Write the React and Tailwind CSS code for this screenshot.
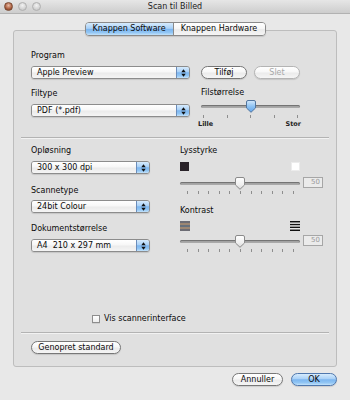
import React from "react";

const blue =
  "bg-[linear-gradient(to_bottom,#d6ebfd_0%,#a8d0f7_45%,#7cb6f0_52%,#92c6f4_80%,#c4e3fb_100%)]";
const white =
  "bg-[linear-gradient(to_bottom,#ffffff_0%,#f7f7f7_45%,#ebebeb_55%,#f5f5f5_100%)]";

function Arrows() {
  return (
    <svg width="5" height="8" viewBox="0 0 5 8">
      <path d="M2.5 0.3 L4.7 3.2 H0.3 Z" fill="#111" />
      <path d="M0.3 4.8 H4.7 L2.5 7.7 Z" fill="#111" />
    </svg>
  );
}

function Popup({ text, className }) {
  return (
    <div
      className={`flex h-[13px] rounded-[3px] border border-[#8c8c8c] overflow-hidden shadow-[0_1px_1px_rgba(0,0,0,0.12)] ${className}`}
    >
      <div
        className={`flex-1 ${white} pl-[5px] text-[8px] leading-[11px] text-[#0a0a0a] whitespace-pre`}
      >
        {text}
      </div>
      <div
        className={`w-[13px] ${blue} border-l border-[#6b8dbb] flex items-center justify-center`}
      >
        <Arrows />
      </div>
    </div>
  );
}

function Pill({ children, className = "", disabled, primary }) {
  return (
    <div
      className={`flex h-[13px] items-center justify-center rounded-full border text-[8px] leading-[11px] shadow-[0_1px_1px_rgba(0,0,0,0.12)] ${
        primary ? `${blue} border-[#4f77ad]` : `${white} ${disabled ? "border-[#b4b4b4]" : "border-[#777]"}`
      } ${disabled ? "text-[#a8a8a8]" : "text-[#0a0a0a]"} ${className}`}
    >
      {children}
    </div>
  );
}

function Knob({ variant, id }) {
  const isBlue = variant === "blue";
  return (
    <svg width="12" height="13" viewBox="0 0 12 13" className="block">
      <defs>
        <linearGradient id={id} x1="0" y1="0" x2="0" y2="1">
          {isBlue ? (
            <>
              <stop offset="0" stopColor="#d4eafd" />
              <stop offset="0.5" stopColor="#8ec3f4" />
              <stop offset="1" stopColor="#5fa2ea" />
            </>
          ) : (
            <>
              <stop offset="0" stopColor="#ffffff" />
              <stop offset="0.6" stopColor="#f0f0f0" />
              <stop offset="1" stopColor="#d8d8d8" />
            </>
          )}
        </linearGradient>
      </defs>
      <path
        d="M1.5 2 Q1.5 0.5 3 0.5 H9 Q10.5 0.5 10.5 2 V8 L6 12.3 L1.5 8 Z"
        fill={`url(#${id})`}
        stroke={isBlue ? "#52769f" : "#8a8a8a"}
        strokeWidth="1"
      />
    </svg>
  );
}

function Track({ className = "", knobLeft, variant, id }) {
  return (
    <div className={`relative shrink-0 h-[13px] ${className}`}>
      <div className="absolute left-0 right-0 top-[5px] h-[3px] rounded-full bg-[#a9a9a9] shadow-[inset_0_1px_1px_rgba(0,0,0,0.35)]" />
      <div className={`absolute top-0 ${knobLeft}`}>
        <Knob variant={variant} id={id} />
      </div>
    </div>
  );
}

function Ticks({ n, className = "" }) {
  return (
    <div className={`flex justify-between ${className}`}>
      {Array.from({ length: n }).map((_, i) => (
        <div key={i} className="w-px h-[3px] bg-[#8e8e8e]" />
      ))}
    </div>
  );
}

function Field() {
  return (
    <div className="shrink-0 w-[20px] h-[11px] border border-[#a6a6a6] bg-[#ebebeb] text-right pr-[2px] text-[7px] leading-[9px] text-[#9a9a9a]">
      50
    </div>
  );
}

function Label({ children, className = "" }) {
  return (
    <div className={`h-[12px] text-[8px] leading-[12px] text-[#0a0a0a] whitespace-nowrap ${className}`}>
      {children}
    </div>
  );
}

function Dark() {
  return (
    <svg width="9" height="9" viewBox="0 0 9 9" className="block">
      <rect width="9" height="9" fill="#2a2329" />
    </svg>
  );
}

function Light() {
  return (
    <svg width="9" height="9" viewBox="0 0 9 9" className="block">
      <rect x="0.5" y="0.5" width="8" height="8" fill="#ffffff" stroke="#ececec" />
    </svg>
  );
}

function LowContrast() {
  return (
    <svg width="10" height="10" viewBox="0 0 10 10" className="block">
      <rect x="0" y="0" width="10" height="2" fill="#6c6c74" />
      <rect x="0" y="2" width="10" height="2" fill="#9c8672" />
      <rect x="0" y="4" width="10" height="2" fill="#66707c" />
      <rect x="0" y="6" width="10" height="2" fill="#9c8672" />
      <rect x="0" y="8" width="10" height="2" fill="#6c6c74" />
    </svg>
  );
}

function HighContrast() {
  return (
    <svg width="10" height="10" viewBox="0 0 10 10" className="block">
      <rect x="0" y="0" width="10" height="10" fill="#ffffff" />
      <rect x="0" y="0" width="10" height="1.5" fill="#111" />
      <rect x="0" y="2.8" width="10" height="1.5" fill="#111" />
      <rect x="0" y="5.6" width="10" height="1.5" fill="#111" />
      <rect x="0" y="8.5" width="10" height="1.5" fill="#111" />
    </svg>
  );
}

function SliderGroup({ label, left, right, id, gapIcon, gapRow, className = "" }) {
  return (
    <div className={`w-[143px] flex flex-col ${className}`}>
      <Label>{label}</Label>
      <div className={`w-[120px] h-[10px] flex items-start justify-between ${gapIcon}`}>
        {left}
        {right}
      </div>
      <div className={`w-[143px] h-[13px] flex items-start justify-between ${gapRow}`}>
        <Track className="w-[120px]" knobLeft="left-[54px]" variant="gray" id={id} />
        <Field />
      </div>
      <Ticks n={11} className="mt-[1px] w-[120px] pl-[7px] pr-[6px]" />
    </div>
  );
}

export default function App() {
  return (
    <div className="w-[350px] h-[400px] bg-[#e8e8e8] flex flex-col font-['DejaVu_Sans',Verdana,sans-serif] text-[#0a0a0a] overflow-hidden">
      {/* title bar */}
      <div className="relative h-[14px] flex items-center bg-[linear-gradient(to_bottom,#e6e6e6,#cdcdcd)] border-b border-[#b2b2b2]">
        <div className="flex items-center gap-[5px] pl-[4px]">
          <div className="w-[9px] h-[9px] rounded-full border border-[#7a4a34] bg-[radial-gradient(circle_at_50%_35%,#e9bca6,#a95c3c_60%,#6e3822)]" />
          <div className="w-[9px] h-[9px] rounded-full border border-[#b0b0b0] bg-[radial-gradient(circle_at_50%_35%,#f2f2f2,#d4d4d4_60%,#bdbdbd)]" />
          <div className="w-[9px] h-[9px] rounded-full border border-[#b0b0b0] bg-[radial-gradient(circle_at_50%_35%,#f2f2f2,#d4d4d4_60%,#bdbdbd)]" />
        </div>
        <div className="absolute inset-0 flex items-center justify-center text-[8px] text-[#222]">
          Scan til Billed
        </div>
      </div>

      {/* tabs */}
      <div className="relative z-10 mt-[8px] flex justify-center">
        <div className="flex h-[14px] rounded-[4px] border border-[#8a8a8a] overflow-hidden shadow-[0_1px_1px_rgba(0,0,0,0.12)]">
          <div className={`w-[87px] ${blue} flex items-center justify-center text-[8px]`}>
            Knappen Software
          </div>
          <div className={`w-[92px] ${white} border-l border-[#8a8a8a] flex items-center justify-center text-[8px]`}>
            Knappen Hardware
          </div>
        </div>
      </div>

      {/* panel */}
      <div className="mx-[13px] -mt-[6px] h-[337px] rounded-[3px] border border-[#bdbdbd] bg-[#e0e0e0] flex flex-col">
        {/* top section */}
        <div className="flex items-start pt-[19px] pl-[17px]">
          <div className="w-[159px] flex flex-col">
            <Label>Program</Label>
            <Popup text="Apple Preview" className="mt-[4px] w-[159px]" />
            <Label className="mt-[9px]">Filtype</Label>
            <Popup text="PDF (*.pdf)" className="mt-[4px] w-[159px]" />
          </div>
          <div className="ml-[11px] w-[99px] flex flex-col">
            <div className="mt-[16px] flex gap-[7px]">
              <Pill className="w-[46px]">Tilføj</Pill>
              <Pill className="w-[46px]" disabled>
                Slet
              </Pill>
            </div>
            <Label className="mt-[8px]">Filstørrelse</Label>
            <Track className="mt-[1px] w-[99px]" knobLeft="left-[44px]" variant="blue" id="kb" />
            <Ticks n={5} className="mt-[2px] px-[2px]" />
            <div className="-ml-[3px] -mr-[1px] mt-[1px] flex justify-between text-[6.5px] leading-[10px] font-bold text-[#222]">
              <span>Lille</span>
              <span>Stor</span>
            </div>
          </div>
        </div>

        <div className="mx-[7px] mt-[8px] h-px bg-[#b3b3b3] shadow-[0_1px_0_#f2f2f2]" />

        {/* middle section */}
        <div className="flex items-start pl-[17px] mt-[7px]">
          <div className="w-[119px] flex flex-col">
            <Label>Opløsning</Label>
            <Popup text="300 x 300 dpi" className="mt-[4px] w-[119px]" />
            <Label className="mt-[11px]">Scannetype</Label>
            <Popup text="24bit Colour" className="mt-[3px] w-[119px]" />
            <Label className="mt-[10px]">Dokumentstørrelse</Label>
            <Popup text="A4  210 x 297 mm" className="mt-[4px] w-[119px]" />
          </div>
          <div className="ml-[30px] w-[143px] flex flex-col">
            <SliderGroup
              label="Lysstyrke"
              left={<Dark />}
              right={<Light />}
              id="kg1"
              gapIcon="mt-[5px]"
              gapRow="mt-[5px]"
            />
            <SliderGroup
              label="Kontrast"
              left={<LowContrast />}
              right={<HighContrast />}
              id="kg2"
              gapIcon="mt-[4px]"
              gapRow="mt-[4px]"
              className="mt-[11px]"
            />
          </div>
        </div>

        {/* checkbox */}
        <div className="mt-[62px] flex items-center h-[10px] pl-[78px]">
          <div className="w-[8px] h-[8px] border border-[#8e8e8e] bg-[linear-gradient(to_bottom,#ffffff,#eeeeee)] shadow-[0_1px_0_rgba(0,0,0,0.08)]" />
          <span className="ml-[4px] text-[8px] leading-[10px]">Vis scannerinterface</span>
        </div>

        <div className="mx-[7px] mt-[8px] h-px bg-[#b3b3b3] shadow-[0_1px_0_#f2f2f2]" />

        <div className="mt-[8px] pl-[17px]">
          <Pill className="w-[90px]">Genopret standard</Pill>
        </div>
      </div>

      {/* bottom buttons */}
      <div className="mt-[6px] flex justify-end gap-[8px] pr-[13px]">
        <Pill className="w-[51px]">Annuller</Pill>
        <Pill className="w-[46px]" primary>
          OK
        </Pill>
      </div>
    </div>
  );
}
